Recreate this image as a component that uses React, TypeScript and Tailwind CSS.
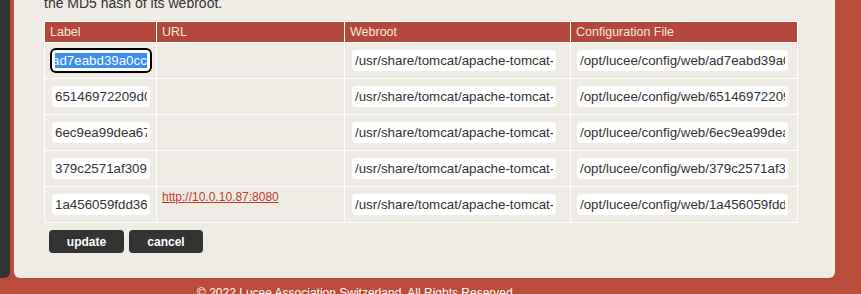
import React, { useEffect, useRef } from "react";

const rows = [
  { label: "ad7eabd39a0cc", url: "", web: "/usr/share/tomcat/apache-tomcat-9.0.0", cfg: "/opt/lucee/config/web/ad7eabd39a0cc" },
  { label: "65146972209d0", url: "", web: "/usr/share/tomcat/apache-tomcat-9.0.0", cfg: "/opt/lucee/config/web/65146972209d0" },
  { label: "6ec9ea99dea67", url: "", web: "/usr/share/tomcat/apache-tomcat-9.0.0", cfg: "/opt/lucee/config/web/6ec9ea99dea67" },
  { label: "379c2571af309", url: "", web: "/usr/share/tomcat/apache-tomcat-9.0.0", cfg: "/opt/lucee/config/web/379c2571af309" },
  { label: "1a456059fdd36", url: "http://10.0.10.87:8080", web: "/usr/share/tomcat/apache-tomcat-9.0.0", cfg: "/opt/lucee/config/web/1a456059fdd36" },
];

const font = { fontFamily: '"Liberation Sans", Arial, sans-serif' };

export default function App() {
  const ref = useRef<HTMLInputElement>(null);
  useEffect(() => {
    if (ref.current) {
      ref.current.focus();
      ref.current.setSelectionRange(0, ref.current.value.length);
    }
  }, []);
  const inputCls =
    "block h-[21px] rounded-[4px] bg-white px-[3px] text-[13.333px] text-[#333] outline-none selection:bg-[#3b8ef0] selection:text-white";
  return (
    <div className="relative h-[294px] w-[861px] overflow-hidden bg-[#b94d39]" style={font}>
      <div className="flex h-[278px] items-stretch">
        <div className="w-[10px] rounded-br-[6px] bg-[#333333]" />
        <div className="ml-[4px] w-[821px] rounded-b-[6px] bg-[#efece6] pl-[30px]">
          <p className="mt-[-5px] text-[14px] leading-[16px] text-[#333]">the MD5 hash of its webroot.</p>
          <table className="mt-[10px] w-[753px] table-fixed border-collapse text-left">
            <colgroup>
              <col className="w-[112px]" />
              <col className="w-[188px]" />
              <col className="w-[226px]" />
              <col className="w-[227px]" />
            </colgroup>
            <thead>
              <tr className="h-[21px] bg-[#b3483a] text-[12.5px] font-normal text-[#f3e6df]">
                <th className="border border-white px-[5px] py-0 font-normal leading-[14px]">Label</th>
                <th className="border border-white px-[5px] py-0 font-normal leading-[14px]">URL</th>
                <th className="border border-white px-[5px] py-0 font-normal leading-[14px]">Webroot</th>
                <th className="border border-white px-[5px] py-0 font-normal leading-[14px]">Configuration File</th>
              </tr>
            </thead>
            <tbody>
              {rows.map((r, i) => (
                <tr key={i} className="h-[36px]">
                  <td className="border border-white px-[7px] py-0 align-middle">
                    {i === 0 ? (
                      <input
                        ref={ref}
                        readOnly
                        defaultValue={r.label}
                        className={inputCls + " w-[98px] ring-2 ring-black"}
                        style={font}
                      />
                    ) : (
                      <input readOnly defaultValue={r.label} className={inputCls + " w-[98px]"} style={font} />
                    )}
                  </td>
                  <td className="border border-white py-0 pl-[5px] align-top">
                    {r.url && (
                      <a href="#" className="mt-[3px] block text-[12px] leading-[14px] text-[#c0392b] underline">
                        {r.url}
                      </a>
                    )}
                  </td>
                  <td className="border border-white py-0 pl-[7px] align-middle">
                    <input readOnly defaultValue={r.web} className={inputCls + " w-[204px]"} style={font} />
                  </td>
                  <td className="border border-white py-0 pl-[6px] align-middle">
                    <input readOnly defaultValue={r.cfg} className={inputCls + " w-[211px]"} style={font} />
                  </td>
                </tr>
              ))}
            </tbody>
          </table>
          <div className="ml-[5px] mt-[7px] flex gap-[5px]">
            <button className="h-[23px] w-[75px] rounded-[4px] bg-[#333333] text-[12px] font-bold text-white">update</button>
            <button className="h-[23px] w-[74px] rounded-[4px] bg-[#333333] text-[12px] font-bold text-white">cancel</button>
          </div>
        </div>
      </div>
      <div className="pl-[197px] pt-[8px] text-[12px] leading-[14px] text-white">
        © 2022 Lucee Association Switzerland. All Rights Reserved
      </div>
    </div>
  );
}
